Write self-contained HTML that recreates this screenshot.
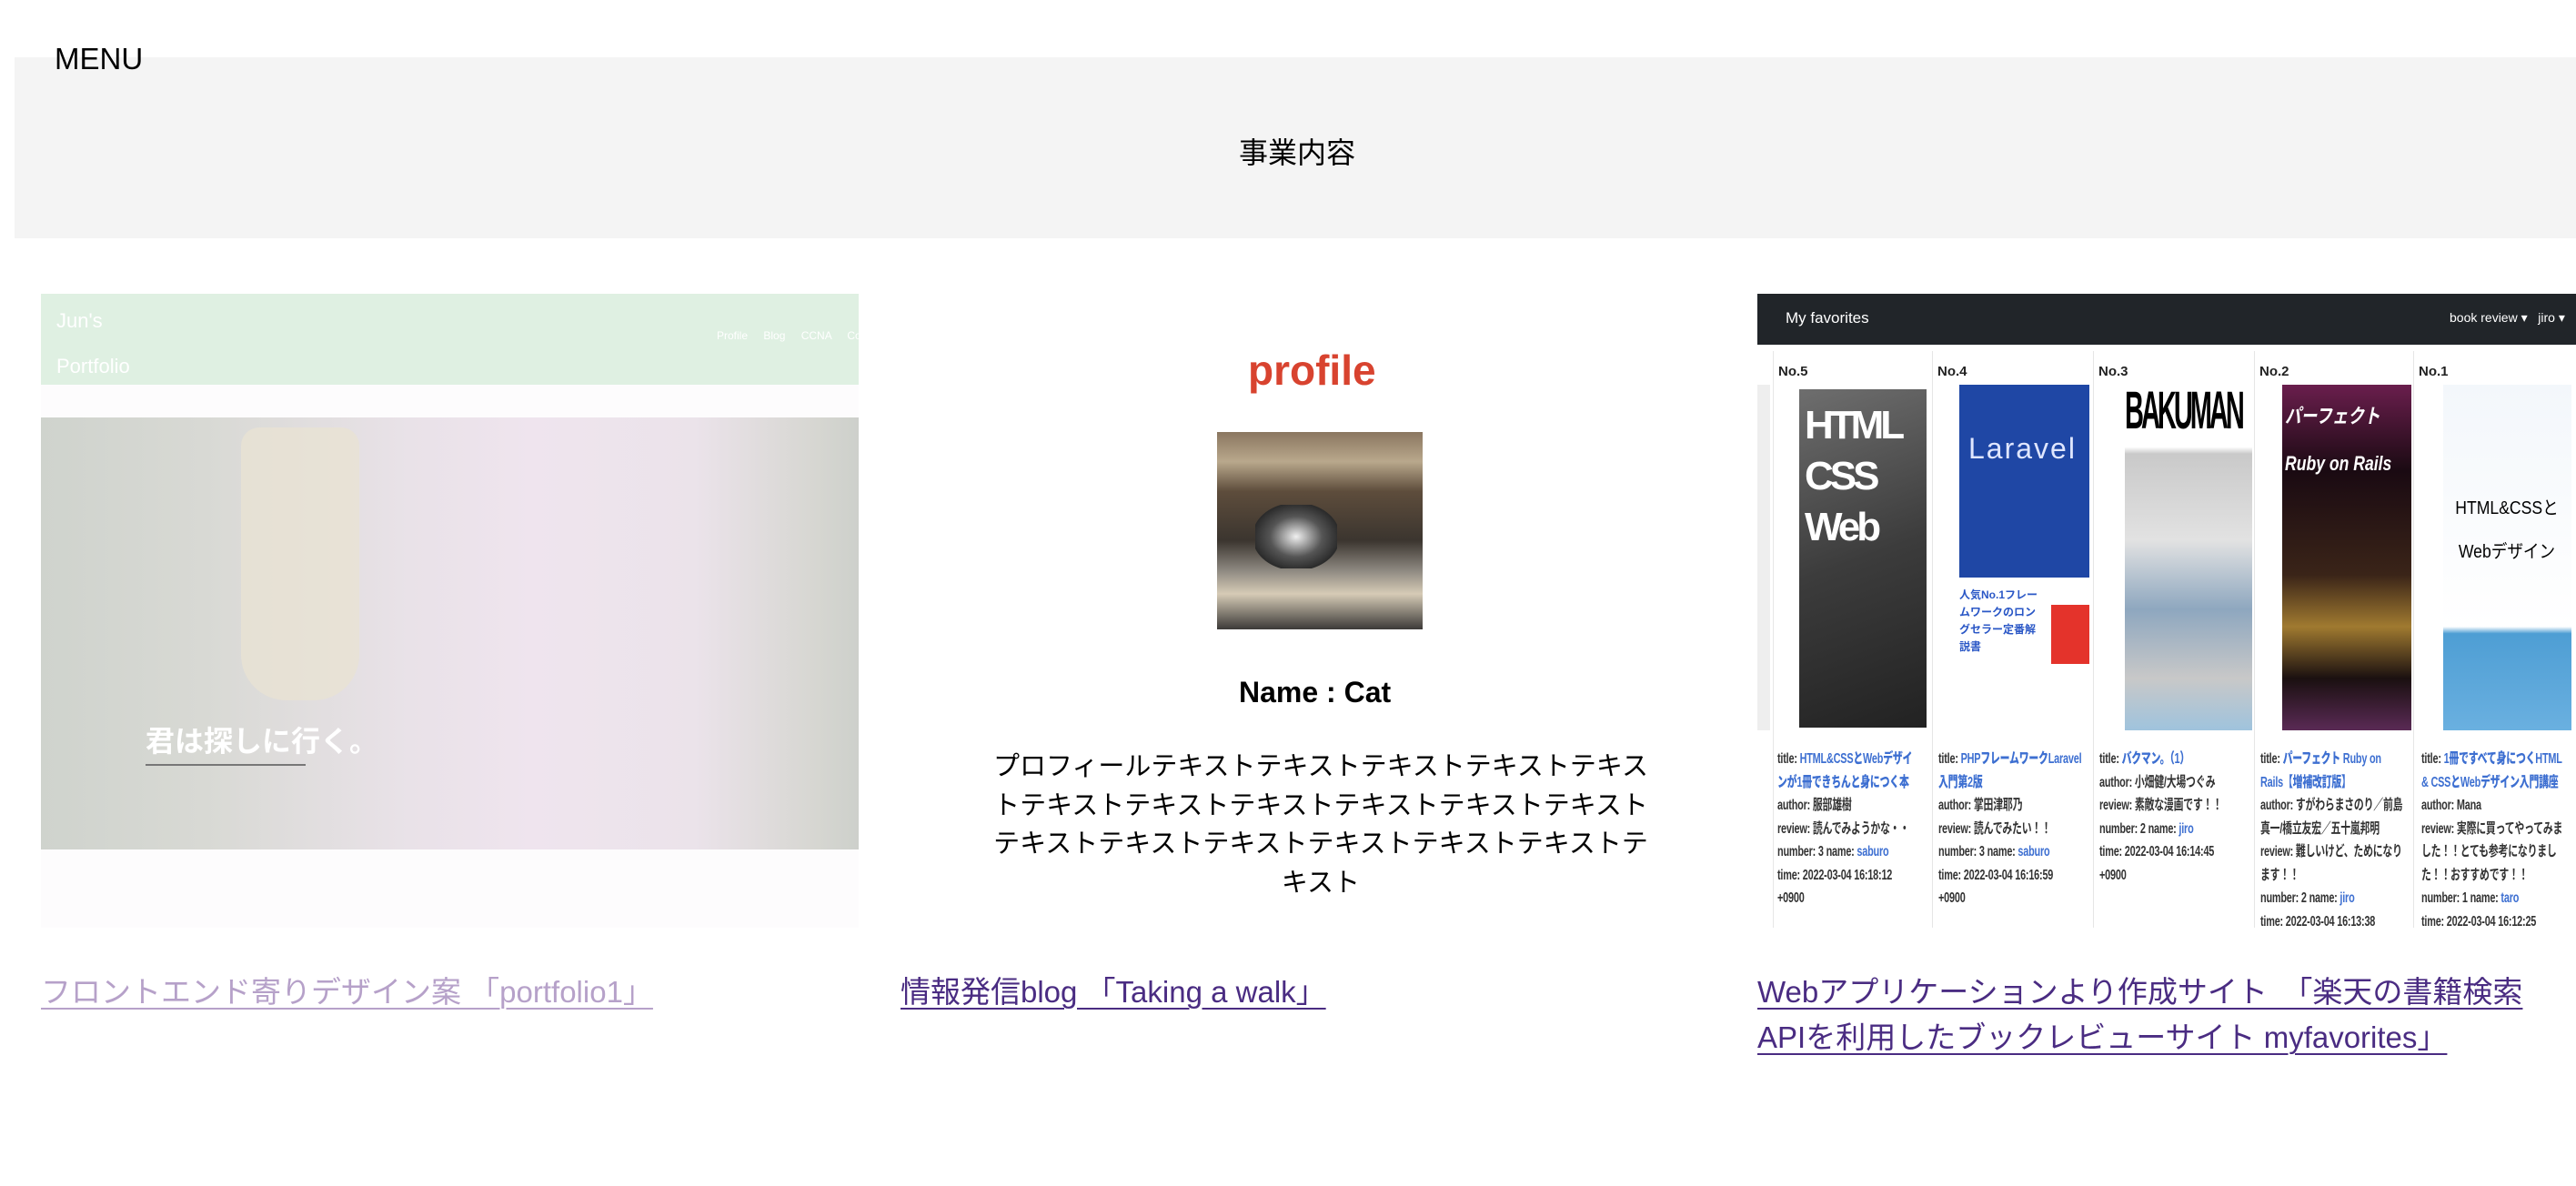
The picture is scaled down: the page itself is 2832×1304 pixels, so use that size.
<!DOCTYPE html>
<html><head><meta charset="utf-8"><style>
*{margin:0;padding:0;box-sizing:border-box}
body{width:2832px;height:1304px;background:#fff;position:relative;overflow:hidden;font-family:"Liberation Sans","Noto Sans CJK JP",sans-serif;color:#000}
.a{position:absolute}
.band{left:16px;top:63px;width:2816px;height:199px;background:#f4f4f4}
.lnk{font-size:33px;line-height:50px;text-decoration:underline;text-decoration-thickness:2px;text-underline-offset:6px}
.t{font-size:16px;line-height:25.5px;color:#333;font-weight:bold;letter-spacing:-0.3px;transform:scaleX(.68);transform-origin:left top;width:232px}
.t b{color:#3d6fd1}
.no{font-size:15px;font-weight:bold;color:#222;top:400px}
.col{top:386px;height:634px;border-left:1px solid #e6e6e6}
</style></head><body>
<div class="a band"></div>
<div class="a" style="left:60px;top:46px;font-size:33px;z-index:2">MENU</div>
<div class="a" style="left:1362px;top:143px;font-size:32px">事業内容</div>

<!-- left image -->
<div class="a" style="left:45px;top:323px;width:899px;height:697px;background:#fdfcfd"></div>
<div class="a" style="left:45px;top:323px;width:899px;height:100px;background:#dff0e2"></div>
<div class="a" style="left:62px;top:328px;color:#fff;font-size:22px;line-height:50px">Jun's<br>Portfolio</div>
<div class="a" style="left:788px;top:362px;color:#fff;font-size:12px;word-spacing:14px">Profile Blog CCNA Conta</div>
<div class="a" style="left:45px;top:459px;width:899px;height:475px;background:linear-gradient(90deg,#cfd3cd 0%,#d8d9d4 20%,#e9e2e8 45%,#efe4ee 60%,#ebe3ea 80%,#d6d6d1 95%,#cdd0cb 100%)"></div>
<div class="a" style="left:265px;top:470px;width:130px;height:300px;background:#e8e2d3;border-radius:20px 20px 50px 50px;opacity:.8"></div>
<div class="a" style="left:160px;top:790px;font-size:32px;color:#fff;font-weight:bold">君は探しに行く。</div>
<div class="a" style="left:160px;top:840px;width:176px;height:2px;background:#777"></div>

<!-- middle -->
<div class="a" style="left:1372px;top:380px;font-size:46px;font-weight:bold;color:#d8432f">profile</div>
<div class="a" style="left:1338px;top:475px;width:226px;height:217px;background:linear-gradient(180deg,#8a7660 0%,#b9a88c 15%,#5e4d3c 30%,#3b352f 55%,#8d8880 70%,#d6cbb6 82%,#3c3a38 100%)"></div>
<div class="a" style="left:1380px;top:555px;width:90px;height:70px;background:radial-gradient(ellipse at 50% 50%,#f0f0f0 0%,#555 45%,#2a2a2a 75%,transparent 76%)"></div>
<div class="a" style="left:1362px;top:743px;font-size:32px;font-weight:bold">Name : Cat</div>
<div class="a" style="left:1078px;top:822px;width:748px;font-size:29px;line-height:42.5px;text-align:center">プロフィールテキストテキストテキストテキストテキストテキストテキストテキストテキストテキストテキストテキストテキストテキストテキストテキストテキストテ<br>キスト</div>

<!-- right -->
<div class="a" style="left:1932px;top:323px;width:900px;height:56px;background:#212529"></div>
<div class="a" style="left:1963px;top:340px;color:#fff;font-size:17px">My favorites</div>
<div class="a" style="left:2693px;top:341px;color:#fff;font-size:14px">book review ▾ &nbsp; jiro ▾</div>
<div class="a" style="left:1932px;top:423px;width:14px;height:380px;background:#eee"></div>
<div class="a col" style="left:1949px"></div><div class="a col" style="left:2124px"></div><div class="a col" style="left:2301px"></div><div class="a col" style="left:2478px"></div><div class="a col" style="left:2653px"></div>
<div class="a no" style="left:1955px">No.5</div><div class="a no" style="left:2130px">No.4</div><div class="a no" style="left:2307px">No.3</div><div class="a no" style="left:2484px">No.2</div><div class="a no" style="left:2659px">No.1</div>
<div class="a" style="left:1978px;top:428px;width:140px;height:372px;background:linear-gradient(160deg,#6e6e6e,#3c3c3c 50%,#222)"></div>
<div class="a" style="left:1984px;top:440px;color:#fff;font-size:44px;font-weight:bold;line-height:56px;letter-spacing:-4px">HTML<br>CSS<br>Web</div>
<div class="a" style="left:2154px;top:423px;width:143px;height:212px;background:#1f47a5"></div>
<div class="a" style="left:2164px;top:475px;color:#dfe6ff;font-size:32px;letter-spacing:2px">Laravel</div>
<div class="a" style="left:2154px;top:645px;width:95px;height:140px;background:#fff;color:#2a57c6;font-size:12px;line-height:19px;font-weight:bold">人気No.1フレームワークのロングセラー定番解説書</div>
<div class="a" style="left:2255px;top:665px;width:42px;height:65px;background:#e4332b"></div>
<div class="a" style="left:2336px;top:423px;width:140px;height:380px;background:linear-gradient(180deg,#fff 0%,#fff 18%,#c9c9c9 20%,#e2e2e2 45%,#8ea7bf 65%,#c8c8c8 85%,#9fc3dd 100%)"></div>
<div class="a" style="left:2336px;top:418px;font-size:58px;font-weight:bold;letter-spacing:-6px;transform:scaleX(.5);transform-origin:left">BAKUMAN</div>
<div class="a" style="left:2509px;top:423px;width:142px;height:380px;background:linear-gradient(180deg,#6a1e4d 0%,#1a0a12 25%,#3a2418 55%,#a07a30 70%,#1a1010 85%,#5a2a55 100%)"></div>
<div class="a" style="left:2512px;top:432px;color:#fff;font-size:22px;font-weight:bold;font-style:italic;line-height:52px;transform:scaleX(.8);transform-origin:left">パーフェクト<br>Ruby on Rails</div>
<div class="a" style="left:2686px;top:423px;width:141px;height:380px;background:linear-gradient(180deg,#f3f7fb 0%,#fff 70%,#4e9ed4 72%,#6ab0e0 100%)"></div>
<div class="a" style="left:2690px;top:535px;font-size:20px;line-height:48px;text-align:center;width:150px;transform:scaleX(.88);transform-origin:left">HTML&amp;CSSと<br>Webデザイン</div>
<div class="a t" style="left:1954px;top:822px">title: <b>HTML&amp;CSSとWebデザインが1冊できちんと身につく本</b><br>author: 服部雄樹<br>review: 読んでみようかな・・<br>number: 3 name: <b>saburo</b><br>time: 2022-03-04 16:18:12 +0900</div>
<div class="a t" style="left:2131px;top:822px">title: <b>PHPフレームワークLaravel入門第2版</b><br>author: 掌田津耶乃<br>review: 読んでみたい！！<br>number: 3 name: <b>saburo</b><br>time: 2022-03-04 16:16:59 +0900</div>
<div class="a t" style="left:2308px;top:822px">title: <b>バクマン。（1）</b><br>author: 小畑健/大場つぐみ<br>review: 素敵な漫画です！！<br>number: 2 name: <b>jiro</b><br>time: 2022-03-04 16:14:45 +0900</div>
<div class="a t" style="left:2485px;top:822px">title: <b>パーフェクト Ruby on Rails【増補改訂版】</b><br>author: すがわらまさのり／前島真一/橋立友宏／五十嵐邦明<br>review: 難しいけど、ためになります！！<br>number: 2 name: <b>jiro</b><br>time: 2022-03-04 16:13:38</div>
<div class="a t" style="left:2662px;top:822px">title: <b>1冊ですべて身につくHTML &amp; CSSとWebデザイン入門講座</b><br>author: Mana<br>review: 実際に買ってやってみました！！とても参考になりました！！おすすめです！！<br>number: 1 name: <b>taro</b><br>time: 2022-03-04 16:12:25</div>
<div class="a" style="left:1900px;top:1022px;width:932px;height:282px;background:#fff"></div>

<a class="a lnk" style="left:45px;top:1066px;color:#b6a1c9">フロントエンド寄りデザイン案 「portfolio1」</a>
<a class="a lnk" style="left:990px;top:1066px;color:#4a2c82">情報発信blog 「Taking a walk」</a>
<a class="a lnk" style="left:1932px;top:1066px;width:850px;color:#4a2c82">Webアプリケーションより作成サイト　「楽天の書籍検索APIを利用したブックレビューサイト myfavorites」</a>
</body></html>
